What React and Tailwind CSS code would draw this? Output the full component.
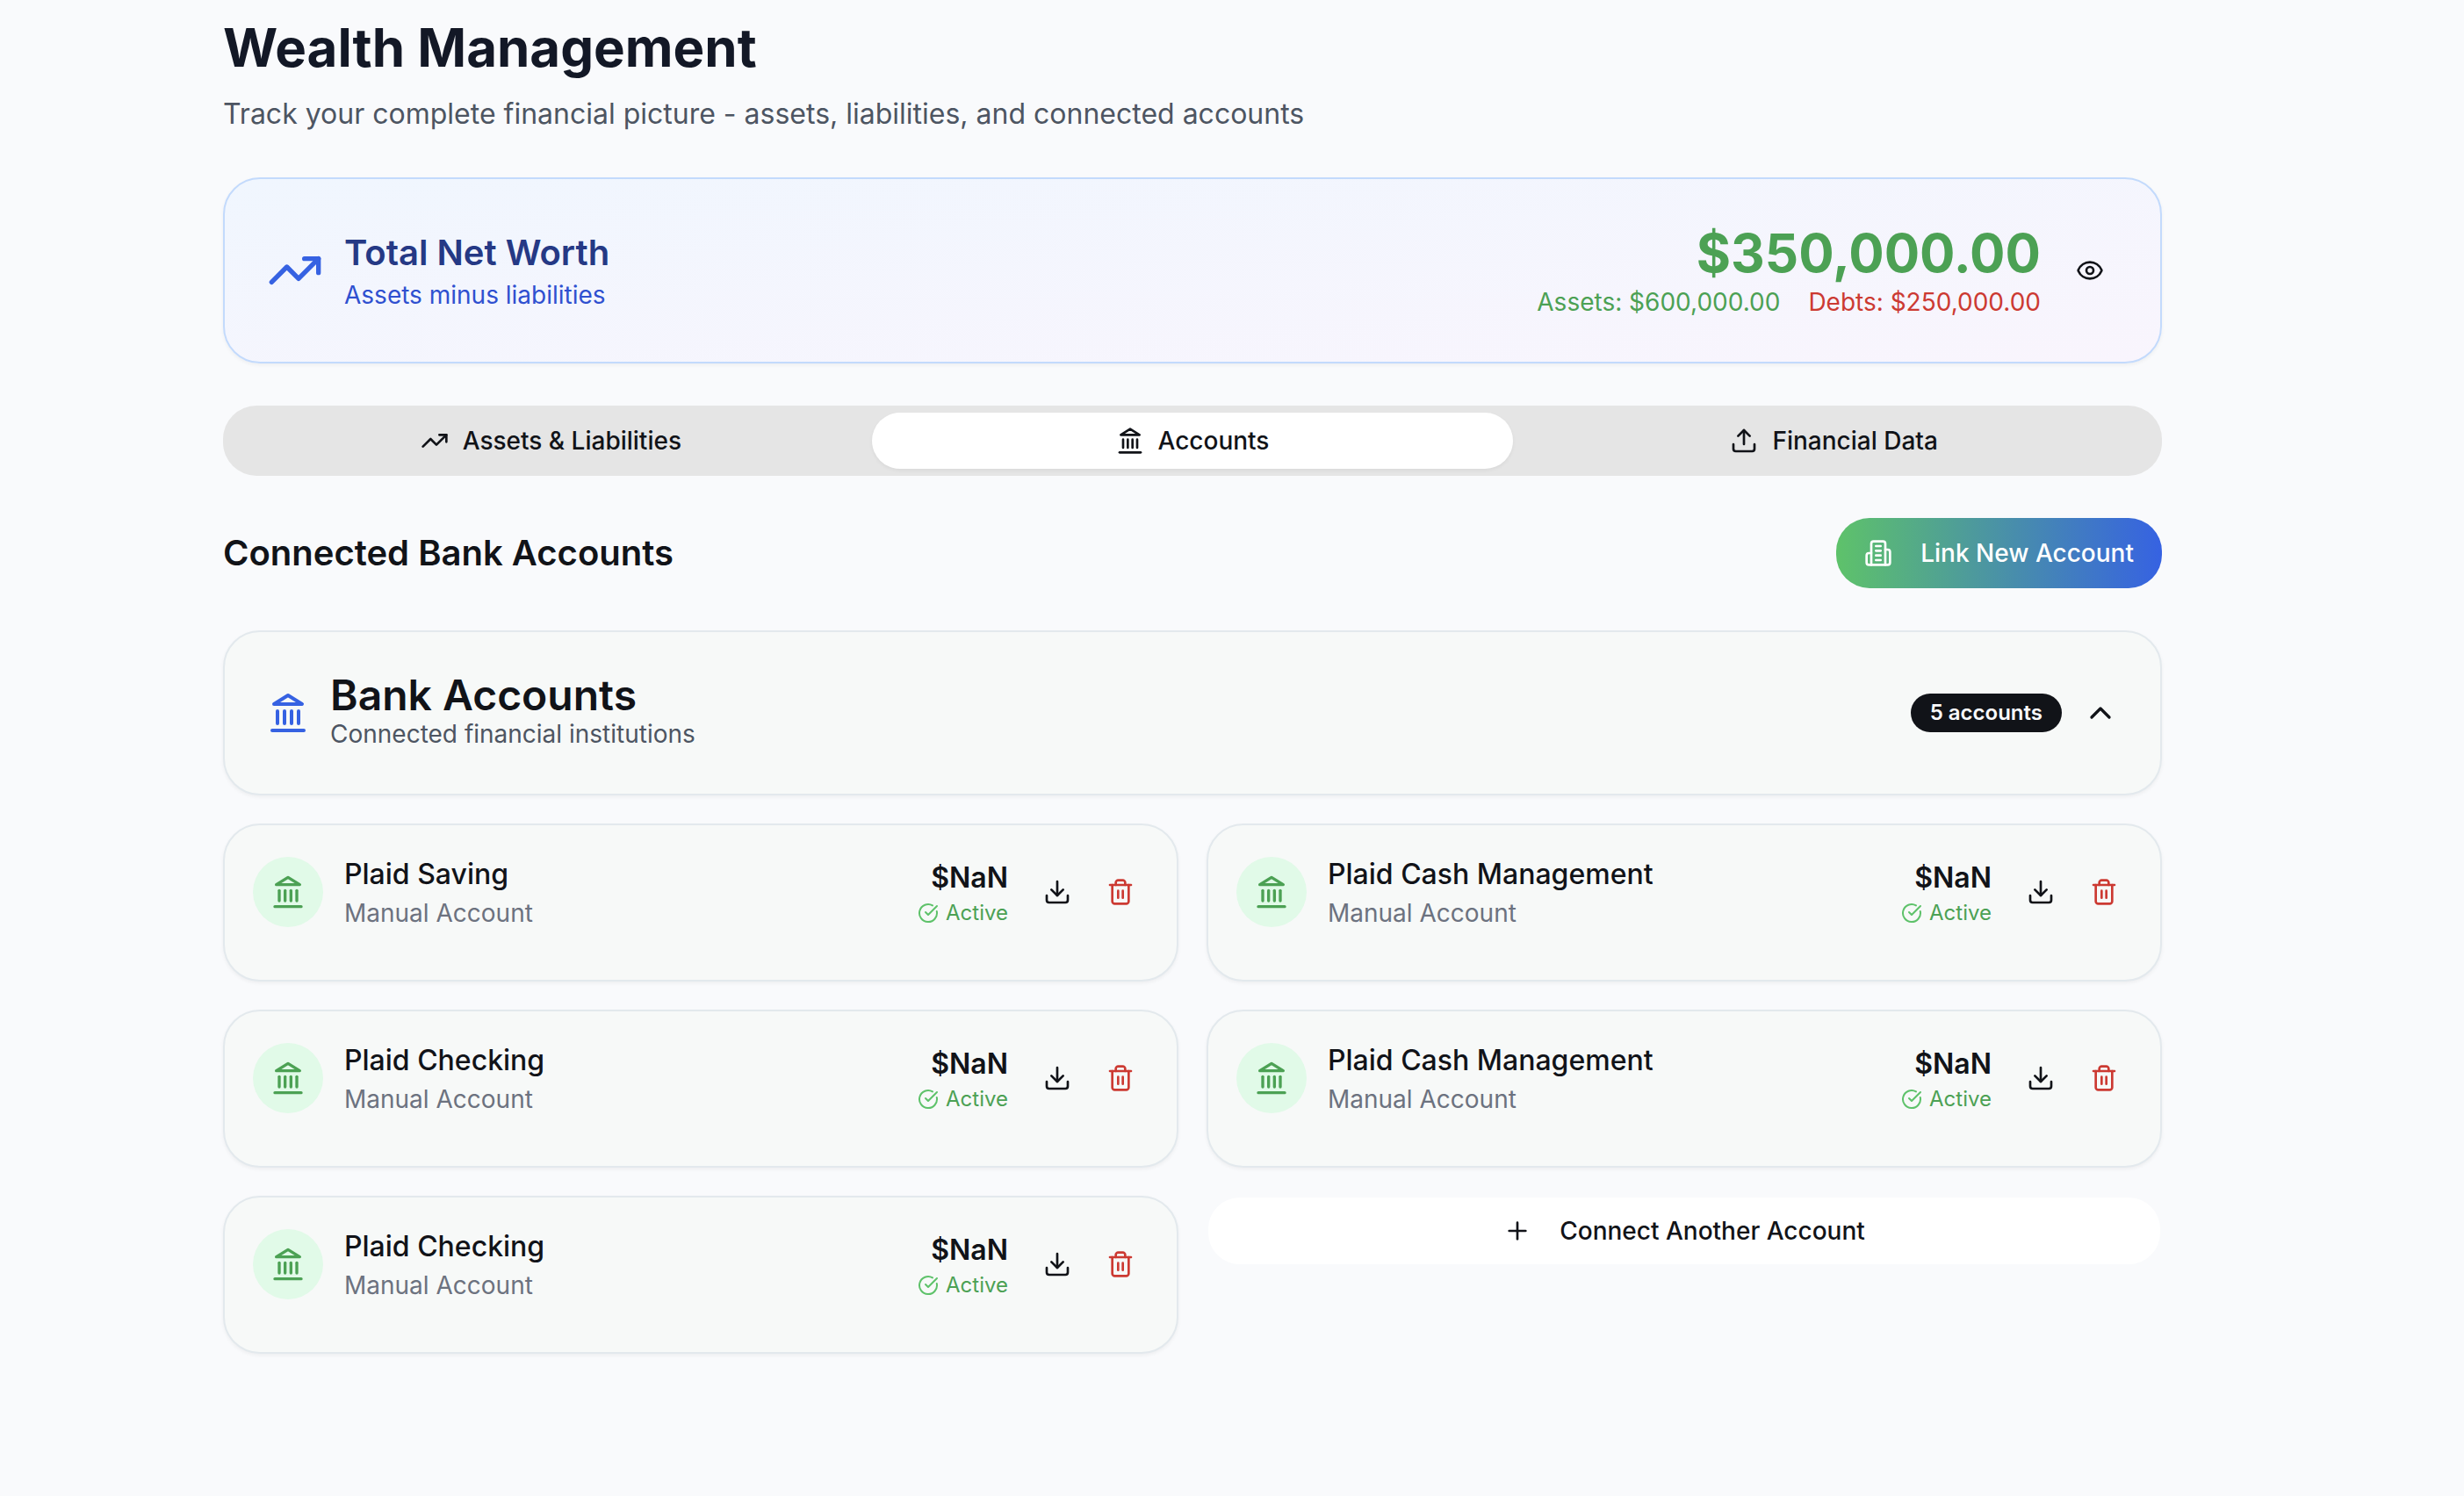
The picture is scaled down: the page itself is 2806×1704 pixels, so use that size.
import { ChevronUp, Eye, Plus, TrendingUp } from "lucide-react";

function Icon({ className, children }) {
  return (
    <svg
      viewBox="0 0 24 24"
      fill="none"
      stroke="currentColor"
      strokeWidth="2"
      strokeLinecap="round"
      strokeLinejoin="round"
      aria-hidden="true"
      className={className}
    >
      {children}
    </svg>
  );
}

function LandmarkIcon({ className }) {
  return (
    <Icon className={className}>
      <path d="M3 22h18" />
      <path d="M6 18v-7" />
      <path d="M10 18v-7" />
      <path d="M14 18v-7" />
      <path d="M18 18v-7" />
      <path d="m12 2 8 5H4Z" />
    </Icon>
  );
}

function BuildingIcon({ className }) {
  return (
    <Icon className={className}>
      <path d="M6 22V4a2 2 0 0 1 2-2h8a2 2 0 0 1 2 2v18Z" />
      <path d="M6 12H4a2 2 0 0 0-2 2v6a2 2 0 0 0 2 2h2" />
      <path d="M18 9h2a2 2 0 0 1 2 2v9a2 2 0 0 1-2 2h-2" />
      <path d="M10 6h4" />
      <path d="M10 10h4" />
      <path d="M10 14h4" />
      <path d="M10 18h4" />
    </Icon>
  );
}

function UploadIcon({ className }) {
  return (
    <Icon className={className}>
      <path d="M21 15v4a2 2 0 0 1-2 2H5a2 2 0 0 1-2-2v-4" />
      <path d="m17 8-5-5-5 5" />
      <path d="M12 3v12" />
    </Icon>
  );
}

function DownloadIcon({ className }) {
  return (
    <Icon className={className}>
      <path d="M21 15v4a2 2 0 0 1-2 2H5a2 2 0 0 1-2-2v-4" />
      <path d="m7 10 5 5 5-5" />
      <path d="M12 15V3" />
    </Icon>
  );
}

function TrashIcon({ className }) {
  return (
    <Icon className={className}>
      <path d="M3 6h18" />
      <path d="M19 6v14c0 1-1 2-2 2H7c-1 0-2-1-2-2V6" />
      <path d="M8 6V4c0-1 1-2 2-2h4c1 0 2 1 2 2v2" />
      <path d="M10 11v6" />
      <path d="M14 11v6" />
    </Icon>
  );
}

function CheckIcon({ className }) {
  return (
    <Icon className={className}>
      <path d="M21.801 10A10 10 0 1 1 17 3.335" />
      <path d="m9 11 3 3L22 4" />
    </Icon>
  );
}

const tabs = [
  { label: "Assets & Liabilities", icon: TrendingUp, active: false },
  { label: "Accounts", icon: LandmarkIcon, active: true },
  { label: "Financial Data", icon: UploadIcon, active: false },
];

const accounts = [
  { id: 1, name: "Plaid Saving" },
  { id: 2, name: "Plaid Cash Management" },
  { id: 3, name: "Plaid Checking" },
  { id: 4, name: "Plaid Cash Management" },
  { id: 5, name: "Plaid Checking" },
];

function AccountCard({ name }) {
  return (
    <li className="rounded-[42px] border-2 border-[#e3e9ed] bg-[#f7f9f8] px-8 pt-8 pb-14 shadow-[0_2px_4px_rgba(0,0,0,0.05)]">
      <div className="flex items-center justify-between">
        <div className="flex items-center gap-6">
          <div className="flex size-20 items-center justify-center rounded-full bg-[#e1fae8]">
            <LandmarkIcon className="size-10 text-[#4ca154]" />
          </div>
          <div>
            <h4 className="text-[32px] leading-[48px] font-medium">{name}</h4>
            <p className="text-[28px] leading-[40px] text-[#6c727f]">Manual Account</p>
          </div>
        </div>
        <div className="flex items-center gap-6">
          <div className="text-right">
            <p className="text-[32px] leading-[48px] font-semibold">$NaN</p>
            <p className="flex items-center justify-end gap-2 text-[24px] leading-[32px] text-[#4ca154]">
              <CheckIcon className="size-6 text-[#5ec26a]" />
              Active
            </p>
          </div>
          <div className="flex gap-2">
            <button type="button" aria-label="Download" className="flex size-16 items-center justify-center">
              <DownloadIcon className="size-8" />
            </button>
            <button type="button" aria-label="Delete" className="flex size-16 items-center justify-center text-[#cc3a32]">
              <TrashIcon className="size-8" />
            </button>
          </div>
        </div>
      </div>
    </li>
  );
}

export default function App() {
  return (
    <main className="flex min-h-screen flex-col gap-12 bg-[#f9fafc] pt-[18px] pr-[344px] pb-16 pl-[254px] font-['Inter',sans-serif] text-[#111318]">
      <header>
        <h1 className="text-[60px] leading-[72px] font-bold text-[#131826]">Wealth Management</h1>
        <p className="mt-4 text-[32px] leading-[48px] text-[#4d5562]">
          Track your complete financial picture - assets, liabilities, and connected accounts
        </p>
      </header>

      <section className="flex items-center justify-between rounded-[42px] border-2 border-[#c3dafc] bg-linear-to-br/srgb from-[#f0f6fe] to-[#f9f5fd] p-12 shadow-[0_2px_4px_rgba(0,0,0,0.05)]">
        <div className="flex items-center gap-6">
          <TrendingUp className="size-16 text-[#3662e2]" />
          <div>
            <h2 className="text-[40px] leading-[56px] font-semibold text-[#253985]">Total Net Worth</h2>
            <p className="text-[28px] leading-[40px] text-[#2f50d0]">Assets minus liabilities</p>
          </div>
        </div>
        <div className="flex items-center gap-6">
          <div className="text-right">
            <p className="text-[60px] leading-[72px] font-bold text-[#4ca154]">$350,000.00</p>
            <p className="flex justify-end gap-8 text-[28px] leading-[40px]">
              <span className="text-[#4ca154]">Assets: $600,000.00</span>
              <span className="text-[#cc3a32]">Debts: $250,000.00</span>
            </p>
          </div>
          <button type="button" aria-label="Hide balances" className="flex size-16 items-center justify-center">
            <Eye className="size-8" />
          </button>
        </div>
      </section>

      <div role="tablist" className="grid grid-cols-3 rounded-[38px] bg-[#e5e5e5] p-2">
        {tabs.map(({ label, icon: TabIcon, active }) => (
          <button
            key={label}
            type="button"
            role="tab"
            aria-selected={active}
            className={
              active
                ? "flex h-16 items-center justify-center gap-4 rounded-[34px] bg-white text-[28px] leading-[40px] font-medium shadow-[0_2px_4px_rgba(0,0,0,0.05)]"
                : "flex h-16 items-center justify-center gap-4 text-[28px] leading-[40px] font-medium"
            }
          >
            <TabIcon className="size-8" />
            {label}
          </button>
        ))}
      </div>

      <div className="flex items-center justify-between">
        <h2 className="text-[40px] leading-[56px] font-semibold">Connected Bank Accounts</h2>
        <button
          type="button"
          className="flex h-20 items-center gap-8 rounded-[38px] bg-linear-to-r/srgb from-[#5ec26a] to-[#3662e2] px-8 text-[28px] leading-[40px] font-medium text-white"
        >
          <BuildingIcon className="size-8" />
          Link New Account
        </button>
      </div>

      <section className="flex flex-col gap-8">
        <div className="flex items-center justify-between rounded-[42px] border-2 border-[#e3e9ed] bg-[#f7f9f8] p-12 shadow-[0_2px_4px_rgba(0,0,0,0.05)]">
          <div className="flex items-center gap-6">
            <LandmarkIcon className="size-12 text-[#3662e2]" />
            <div>
              <h3 className="text-[48px] leading-[48px] font-semibold">Bank Accounts</h3>
              <p className="text-[28px] leading-[40px] text-[#4d5562]">Connected financial institutions</p>
            </div>
          </div>
          <div className="flex items-center gap-6">
            <span className="flex h-11 items-center rounded-full bg-[#111318] px-[22px] text-[24px] leading-[32px] font-semibold text-[#f9fafc]">
              5 accounts
            </span>
            <button type="button" aria-label="Collapse bank accounts" className="flex">
              <ChevronUp className="size-10" />
            </button>
          </div>
        </div>

        <ul className="grid grid-cols-2 items-start gap-8">
          {accounts.map((account) => (
            <AccountCard key={account.id} name={account.name} />
          ))}
          <li>
            <button
              type="button"
              className="flex h-20 w-full items-center justify-center gap-8 rounded-[38px] border-2 border-[#f9fafc] bg-white text-[28px] leading-[40px] font-medium"
            >
              <Plus className="size-8" />
              Connect Another Account
            </button>
          </li>
        </ul>
      </section>
    </main>
  );
}
